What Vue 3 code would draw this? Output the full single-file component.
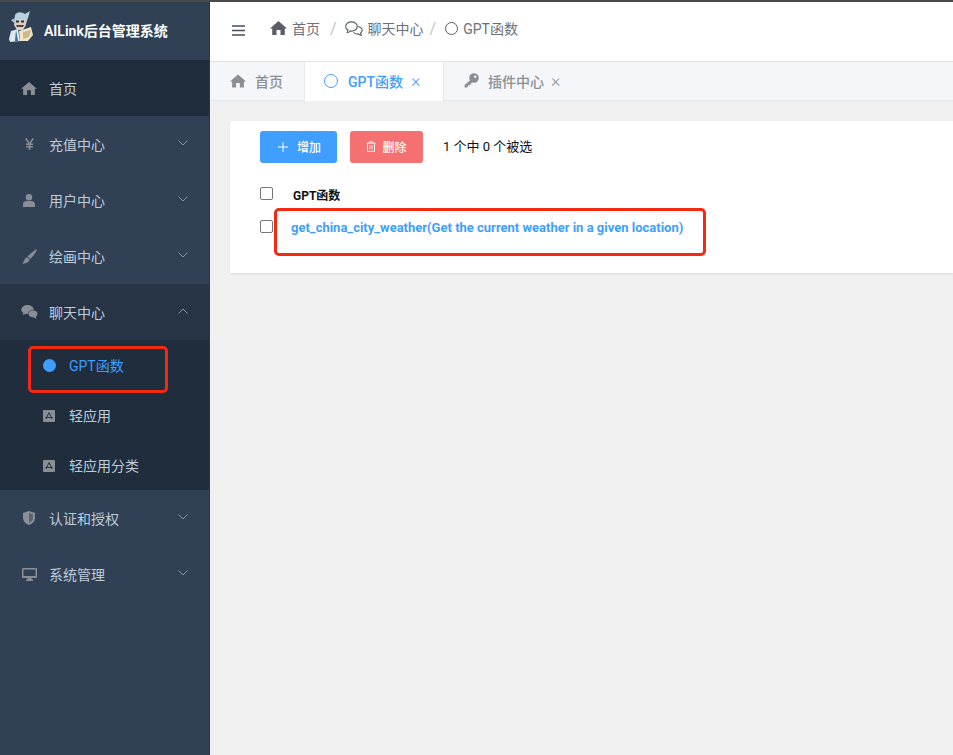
<template>
  <div class="page">
    <div class="topline"></div>
    <div class="body">
      <aside class="side">
        <div class="logo">
          <svg class="logo-img" width="26" height="32" viewBox="0 0 26 32">
            <path d="M8 5 C10 1 15 2 18 4 L23 1 L21 8 L19 14 L7 12 Z" fill="#b5d0de"/>
            <path d="M4 10 L8 8 L7 13 Z" fill="#a6c2d0"/>
            <path d="M8 9 L18 9 L19 15 L16 20 L10 20 L7 15 Z" fill="#d9cfc6"/>
            <rect x="9" y="10.5" width="3" height="2" fill="#3a2c28"/>
            <rect x="14" y="10.5" width="3" height="2" fill="#3a2c28"/>
            <path d="M9 15 L17 15 L16 17 L10 17 Z" fill="#5c4038"/>
            <path d="M2 29 L4 21 L11 19 L13 31 L3 32 Z" fill="#dce8ee"/>
            <path d="M12 21 L24 17 L26 25 L21 31 L13 31 Z" fill="#efe3c9"/>
            <path d="M16 22 L24 20 L22 27 L16 29 Z" fill="#cdb98f"/>
            <path d="M9 20 L11 31 L8 31 Z" fill="#2f6d96"/>
          </svg>
          <span class="logo-text">AILink后台管理系统</span>
        </div>
        <nav>
          <div v-for="m in menus" :key="m.label" class="menu" :class="{ dark: m.dark, open: m.open }">
            <span class="ico" v-html="icons[m.icon]"></span>
            <span class="label">{{ m.label }}</span>
            <svg v-if="m.arrow" class="arrow" width="10" height="6" viewBox="0 0 10 6"><path :d="m.open ? 'M0.5 5.5 L5 1 L9.5 5.5' : 'M0.5 0.5 L5 5 L9.5 0.5'" fill="none" stroke="#8a94a0" stroke-width="1"/></svg>
          </div>
          <div v-for="s in subs" :key="s.label" class="sub" :class="{ active: s.active }">
            <span v-if="s.active" class="dot"></span>
            <svg v-else class="sub-ico" width="12" height="12" viewBox="0 0 12 12"><rect width="12" height="12" rx="1" fill="#8a8f96"/><path d="M6 2.5 L3 9 M6 2.5 L9 9 M2.5 7.5 H9.5" stroke="#1f2d3d" stroke-width="0.9" fill="none"/></svg>
            <span class="sub-label">{{ s.label }}</span>
            <span v-if="s.active" class="mark mark-side"></span>
          </div>
          <div v-for="m in menus2" :key="m.label" class="menu">
            <span class="ico" v-html="icons[m.icon]"></span>
            <span class="label">{{ m.label }}</span>
            <svg class="arrow" width="10" height="6" viewBox="0 0 10 6"><path d="M0.5 0.5 L5 5 L9.5 0.5" fill="none" stroke="#8a94a0" stroke-width="1"/></svg>
          </div>
        </nav>
      </aside>
      <main class="main">
        <header class="head">
          <svg class="burger" width="13" height="11" viewBox="0 0 13 11"><path d="M0 1 H13 M0 5.5 H13 M0 10 H13" stroke="#4a4f57" stroke-width="1.6"/></svg>
          <div class="crumbs">
            <svg width="17" height="14" viewBox="0 0 17 14"><path d="M8.5 0 L17 7.4 L14.8 7.4 L14.8 14 L10.5 14 L10.5 9 L6.5 9 L6.5 14 L2.2 14 L2.2 7.4 L0 7.4 Z" fill="#5a5e66"/></svg>
            <span class="c-text first">首页</span>
            <span class="sep s1">/</span>
            <svg width="18" height="15" viewBox="0 0 18 15"><ellipse cx="6.5" cy="5.5" rx="5.8" ry="4.6" fill="none" stroke="#5a5e66" stroke-width="1.1"/><path d="M3 9 L2 12 L6 10" fill="#fff" stroke="#5a5e66" stroke-width="1"/><path d="M12.5 5.5 C16 5.8 17.5 8 17 10 C16.7 11.2 16 11.8 15.5 12.2 L16.2 14.4 L13 12.9 C11.5 13.2 9.5 12.6 8.6 11.2" fill="none" stroke="#5a5e66" stroke-width="1.1"/></svg>
            <span class="c-text mid">聊天中心</span>
            <span class="sep s2">/</span>
            <span class="ring-b"></span>
            <span class="c-text last">GPT函数</span>
          </div>
        </header>
        <div class="tabs">
          <div class="tab t1">
            <svg width="16" height="14" viewBox="0 0 17 14"><path d="M8.5 0 L17 7.4 L14.8 7.4 L14.8 14 L10.5 14 L10.5 9 L6.5 9 L6.5 14 L2.2 14 L2.2 7.4 L0 7.4 Z" fill="#8a8f96"/></svg>
            <span>首页</span>
          </div>
          <div class="tab t2">
            <span class="ring-t"></span>
            <span>GPT函数</span>
            <span class="x">×</span>
          </div>
          <div class="tab t3">
            <svg width="15" height="15" viewBox="0 0 15 15"><circle cx="10" cy="5" r="4.8" fill="#8a8f96"/><circle cx="11.2" cy="3.8" r="1.2" fill="#f5f6f9"/><path d="M7 6.5 L0.5 12 L0.5 14.5 L3.5 14.5 L4 12.5 L6 12 L8.8 8.5 Z" fill="#8a8f96"/></svg>
            <span>插件中心</span>
            <span class="x grey">×</span>
          </div>
        </div>
        <section class="content">
          <div class="card">
            <div class="toolbar">
              <button class="btn blue">
                <svg width="10" height="10" viewBox="0 0 10 10"><path d="M5 0 V10 M0 5 H10" stroke="#fff" stroke-width="1"/></svg>
                <span>增加</span>
              </button>
              <button class="btn red">
                <svg width="10" height="11" viewBox="0 0 10 11"><path d="M0.5 2.2 H9.5 M3.3 2 V0.7 H6.7 V2 M1.5 2.2 V10.4 H8.5 V2.2 M4 4.2 V8.4 M6 4.2 V8.4" fill="none" stroke="#fff" stroke-width="0.9"/></svg>
                <span>删除</span>
              </button>
              <span class="count">1 个中 0 个被选</span>
            </div>
            <div class="row head-row">
              <span class="check"></span>
              <span class="th">GPT函数</span>
            </div>
            <div class="row data-row">
              <span class="check"></span>
              <a class="link">get_china_city_weather(Get the current weather in a given location)</a>
              <span class="mark mark-row"></span>
            </div>
          </div>
        </section>
      </main>
    </div>
  </div>
</template>

<script setup>
const icons = {
  home: '<svg width="16" height="13" viewBox="0 0 17 14"><path d="M8.5 0 L17 7.4 L14.8 7.4 L14.8 14 L10.5 14 L10.5 9 L6.5 9 L6.5 14 L2.2 14 L2.2 7.4 L0 7.4 Z" fill="#8a8f96"/></svg>',
  yen: '<svg width="9" height="12" viewBox="0 0 9 12"><path d="M0.8 0.5 L4.5 6 L8.2 0.5 M4.5 6 V12 M1 6.3 H8 M1 8.8 H8" fill="none" stroke="#8a8f96" stroke-width="1.5"/></svg>',
  user: '<svg width="12" height="13" viewBox="0 0 12 13"><circle cx="6" cy="3.2" r="3.2" fill="#8a8f96"/><path d="M0 13 V10 C0 8 2 7 3.5 7 H8.5 C10 7 12 8 12 10 V13 Z" fill="#8a8f96"/></svg>',
  brush: '<svg width="15" height="15" viewBox="0 0 15 15"><path d="M15 0 C15 2 11 7.5 8.2 10 L5.6 7.6 C8 4.6 12 1.4 15 0 Z" fill="#8a8f96"/><path d="M5 8.2 L7.6 10.6 C7 13.6 3 15 0 14.6 C2 13.6 2 9.4 5 8.2 Z" fill="#8a8f96"/></svg>',
  chat: '<svg width="17" height="14" viewBox="0 0 17 14"><ellipse cx="6.5" cy="4.6" rx="6.3" ry="4.5" fill="#8a8f96"/><path d="M2.5 7.5 L1.5 10 L5 8.8 Z" fill="#8a8f96"/><ellipse cx="12" cy="8.8" rx="4.8" ry="3.7" fill="#8a8f96" stroke="#263445" stroke-width="0.6"/><path d="M14.5 11 L15.5 13.8 L12 12.3 Z" fill="#8a8f96"/></svg>',
  shield: '<svg width="12" height="14" viewBox="0 0 12 14"><path d="M6 0 L12 2 V7 C12 10.5 9 13 6 14 C3 13 0 10.5 0 7 V2 Z" fill="#8a8f96"/><path d="M6 2 L10 3.3 V7 C10 9.4 8 11 6 11.9 Z" fill="#304156" opacity="0.55"/></svg>',
  monitor: '<svg width="15" height="13" viewBox="0 0 15 13"><path fill-rule="evenodd" d="M1 0 H14 A1 1 0 0 1 15 1 V9 A1 1 0 0 1 14 10 H1 A1 1 0 0 1 0 9 V1 A1 1 0 0 1 1 0 Z M1.5 1.5 V8 H13.5 V1.5 Z" fill="#8a8f96"/><path d="M5.5 10 H9.5 V11.5 H11 V13 H4 V11.5 H5.5 Z" fill="#8a8f96"/></svg>'
}
const menus = [
  { label: '首页', icon: 'home', dark: true },
  { label: '充值中心', icon: 'yen', arrow: true },
  { label: '用户中心', icon: 'user', arrow: true },
  { label: '绘画中心', icon: 'brush', arrow: true },
  { label: '聊天中心', icon: 'chat', arrow: true, open: true }
]
const subs = [
  { label: 'GPT函数', active: true },
  { label: '轻应用' },
  { label: '轻应用分类' }
]
const menus2 = [
  { label: '认证和授权', icon: 'shield' },
  { label: '系统管理', icon: 'monitor' }
]
</script>

<style>
html, body { margin: 0; padding: 0; background: #f0f0f0; overflow: hidden; }
</style>

<style scoped>
.page { width: 953px; height: 755px; display: flex; flex-direction: column; font-family: "Roboto", "Noto Sans CJK SC", sans-serif; }
.topline { height: 2px; background: #4a4a4c; flex: none; }
.body { flex: 1; display: flex; min-height: 0; }
.side { width: 209px; flex: none; background: #304156; border-right: 1px solid #28364a; }
.logo { height: 58px; display: flex; align-items: center; padding-left: 8px; gap: 10px; }
.logo-img { margin: -10px 0 0 -1px; }
.logo-text { color: #fff; font-size: 14px; font-weight: 600; margin: -2px 0 0 1px; }
.menu { height: 56px; display: flex; align-items: center; position: relative; color: #bfcbd9; font-size: 14px; }
.menu.dark { background: #1f2d3d; }
.menu.open { background: #263445; }
.ico { width: 18px; margin-left: 20px; display: flex; justify-content: center; }
.label { margin-left: 11px; }
.arrow { position: absolute; left: 178px; top: 24px; }
.sub { height: 50px; display: flex; align-items: center; position: relative; background: #1f2d3d; color: #bfcbd9; font-size: 14px; padding-left: 43px; }
.sub.active { z-index: 1; color: #409eff; }
.dot { width: 13px; height: 13px; border-radius: 50%; background: #409eff; }
.sub-ico { margin: 2px 1px 0 0; }
.sub-label { margin-left: 13px; }
.mark { position: absolute; border: 3px solid #f22a12; border-radius: 5px; box-sizing: border-box; }
.mark-side { left: 28px; top: 6px; width: 140px; height: 47px; }
.main { flex: 1; min-width: 0; display: flex; flex-direction: column; }
.head { height: 60px; flex: none; background: #fff; border-bottom: 1px solid #dfe3ea; display: flex; align-items: center; box-sizing: border-box; padding: 0 0 3px 22px; }
.burger { margin-top: 1px; }
.crumbs { display: flex; align-items: center; margin: 0 0 4px 25px; color: #6b7079; font-size: 14px; }
.c-text.first { margin-left: 5px; }
.sep { color: #c0c4cc; font-size: 16px; }
.s1 { margin: 0 8px 0 10px; }
.s2 { margin: 0 9px 0 6px; }
.c-text.mid { margin-left: 5px; }
.c-text.last { margin-left: 5px; }
.ring-b { width: 13px; height: 13px; box-sizing: border-box; border: 1.3px solid #5a5e66; border-radius: 50%; }
.tabs { height: 39px; flex: none; background: #f5f6f9; border-bottom: 1px solid #e4e7ed; display: flex; box-sizing: border-box; color: #8a8f96; font-size: 14px; font-weight: 500; }
.tab { display: flex; align-items: center; box-sizing: border-box; height: 39px; padding-bottom: 2px; }
.t1 { width: 95px; padding-left: 20px; gap: 9px; border-right: 1px solid #e4e7ed; }
.t2 { width: 139px; padding-left: 19px; gap: 10px; background: #fff; color: #409eff; border-right: 1px solid #e4e7ed; }
.t3 { padding-left: 20px; gap: 9px; }
.t2 .x, .t3 .x { margin-left: -2px; }
.ring-t { width: 14px; height: 14px; box-sizing: border-box; border: 1.4px solid #409eff; border-radius: 50%; }
.x { font-size: 18px; font-weight: 300; line-height: 1; }
.content { flex: 1; padding: 20px 0 0 20px; background: #f0f0f0; }
.card { height: 152px; background: #fff; box-shadow: 0 1px 2px rgba(0,0,0,0.08); padding: 10px 0 0 30px; box-sizing: border-box; }
.toolbar { display: flex; align-items: center; font-size: 14px; }
.btn { height: 32px; border: none; border-radius: 3px; color: #fff; font: 500 12px "Roboto", "Noto Sans CJK SC", sans-serif; display: flex; align-items: center; justify-content: center; padding: 0 0 1px; gap: 6px; }
.blue { width: 77px; background: #409eff; gap: 9px; padding-left: 2px; }
.red { width: 73px; background: #f56c6c; margin-left: 13px; opacity: 0.97; }
.count { margin: 0 0 3px 20px; color: #111; font-size: 13px; }
.row { display: flex; position: relative; }
.head-row { margin-top: 24px; height: 33px; }
.check { width: 13px; height: 13px; border: 1px solid #767676; border-radius: 2px; background: #fff; flex: none; box-sizing: border-box; }
.th { font-size: 12px; font-weight: 700; color: #111; margin-left: 20px; margin-top: -1px; }
.link { font-size: 13px; font-weight: 700; color: #409eff; margin-left: 18px; margin-top: 0; white-space: nowrap; }
.mark-row { left: 14px; top: -12px; width: 432px; height: 48px; }
</style>
